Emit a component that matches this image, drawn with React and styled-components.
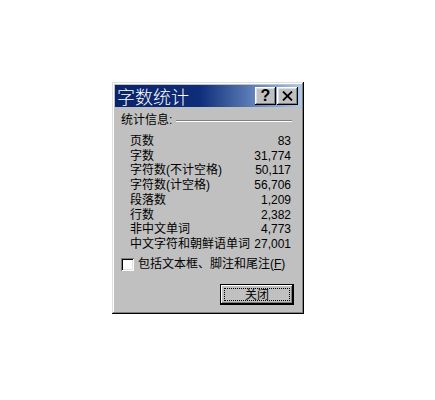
import styled, { createGlobalStyle } from 'styled-components';

const GlobalStyle = createGlobalStyle`
  html, body {
    margin: 0;
    padding: 0;
    background: #ffffff;
  }
`;

const stats = [
  ['页数', '83'],
  ['字数', '31,774'],
  ['字符数(不计空格)', '50,117'],
  ['字符数(计空格)', '56,706'],
  ['段落数', '1,209'],
  ['行数', '2,382'],
  ['非中文单词', '4,773'],
  ['中文字符和朝鲜语单词', '27,001'],
];

const Page = styled.div`
  padding: 82px 0 0 112px;
  font-family: "Liberation Sans", "Noto Sans CJK SC", sans-serif;
`;

// 클래식 윈도우 테두리
const Window = styled.div`
  width: 192px;
  height: 232px;
  box-sizing: border-box;
  padding: 3px;
  background: #c0c0c0;
  box-shadow:
    inset -1px -1px 0 #000000,
    inset 1px 1px 0 #dfdfdf,
    inset -2px -2px 0 #808080,
    inset 2px 2px 0 #ffffff;
  display: flex;
  flex-direction: column;
`;

const TitleBar = styled.div`
  height: 22px;
  display: flex;
  align-items: center;
  padding: 0 3px 0 2px;
  background: linear-gradient(to right, #0a246a 0%, #0e2c78 45%, #a6caf0 100%);
`;

const TitleText = styled.div`
  flex: 1;
  color: #ffffff;
  font-size: 18px;
  line-height: 22px;
  font-family: "Noto Sans CJK SC", sans-serif;
  font-weight: 300;
`;

const CaptionButton = styled.div`
  width: 21px;
  height: 18px;
  box-sizing: border-box;
  background: #c0c0c0;
  display: flex;
  align-items: center;
  justify-content: center;
  margin-left: ${(p) => (p.$gap ? '1px' : '0')};
  box-shadow:
    inset -1px -1px 0 #000000,
    inset 1px 1px 0 #ffffff,
    inset -2px -2px 0 #808080,
    inset 2px 2px 0 #dfdfdf;
  font-family: "Liberation Sans", sans-serif;
  font-weight: bold;
  font-size: 16px;
  color: #000000;
`;

const Body = styled.div`
  flex: 1;
  display: flex;
  flex-direction: column;
  padding: 6px 7px 0 6px;
  font-size: 12px;
  color: #000000;
`;

const GroupHeader = styled.div`
  display: flex;
  align-items: center;
  line-height: 15px;
  gap: 4px;
`;

const EtchedLine = styled.div`
  flex: 1;
  height: 0;
  border-top: 1px solid #808080;
  border-bottom: 1px solid #ffffff;
  margin-right: 2px;
`;

const StatList = styled.div`
  margin-top: 6px;
  padding-left: 9px;
  padding-right: 3px;
  display: flex;
  flex-direction: column;
`;

const StatRow = styled.div`
  display: flex;
  justify-content: space-between;
  line-height: 14.7px;
  white-space: nowrap;
`;

const CheckRow = styled.div`
  display: flex;
  align-items: center;
  margin-top: 5px;
  line-height: 15px;
  gap: 4px;
  white-space: nowrap;
`;

const CheckBox = styled.div`
  width: 13px;
  height: 13px;
  box-sizing: border-box;
  background: #ffffff;
  box-shadow:
    inset 1px 1px 0 #808080,
    inset -1px -1px 0 #ffffff,
    inset 2px 2px 0 #000000,
    inset -2px -2px 0 #dfdfdf;
`;

const Hotkey = styled.span`
  text-decoration: underline;
`;

const Footer = styled.div`
  display: flex;
  justify-content: flex-end;
  margin-top: 12px;
`;

const DefaultButton = styled.button`
  width: 74px;
  height: 21px;
  padding: 3px;
  box-sizing: border-box;
  border: 1px solid #000000;
  background: #c0c0c0;
  box-shadow:
    inset -1px -1px 0 #000000,
    inset 1px 1px 0 #ffffff,
    inset -2px -2px 0 #808080;
  font-family: "Noto Sans CJK SC", sans-serif;
  font-size: 12px;
  color: #000000;
  display: flex;
`;

const FocusRect = styled.span`
  flex: 1;
  border: 1px dotted #000000;
  display: flex;
  align-items: center;
  justify-content: center;
  line-height: 12px;
`;

export default function App() {
  return (
    <Page>
      <GlobalStyle />
      <Window>
        <TitleBar>
          <TitleText>字数统计</TitleText>
          <CaptionButton>?</CaptionButton>
          <CaptionButton $gap>
            <svg width="11" height="10" viewBox="0 0 11 10">
              <path d="M1 0.5 L10 9.5 M10 0.5 L1 9.5" stroke="#000" strokeWidth="1.8" />
            </svg>
          </CaptionButton>
        </TitleBar>
        <Body>
          <GroupHeader>
            <span>统计信息:</span>
            <EtchedLine />
          </GroupHeader>
          <StatList>
            {stats.map(([label, value]) => (
              <StatRow key={label}>
                <span>{label}</span>
                <span>{value}</span>
              </StatRow>
            ))}
          </StatList>
          <CheckRow>
            <CheckBox />
            <span>
              包括文本框、脚注和尾注(<Hotkey>F</Hotkey>)
            </span>
          </CheckRow>
          <Footer>
            <DefaultButton>
              <FocusRect>关闭</FocusRect>
            </DefaultButton>
          </Footer>
        </Body>
      </Window>
    </Page>
  );
}
